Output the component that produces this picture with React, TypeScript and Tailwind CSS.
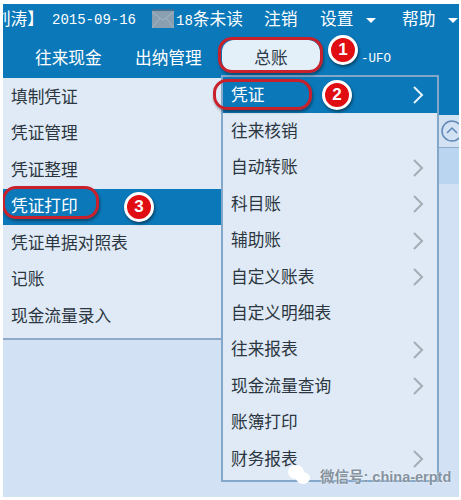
const CJK = "font-['Liberation_Sans','Noto_Sans_CJK_SC',sans-serif]";
const MONO = "font-['Liberation_Mono','Noto_Sans_CJK_SC',monospace]";

const leftItems = ["填制凭证", "凭证管理", "凭证整理", "凭证打印", "凭证单据对照表", "记账", "现金流量录入"];

const subItems = [
  { label: "凭证", arrow: true },
  { label: "往来核销", arrow: false },
  { label: "自动转账", arrow: true },
  { label: "科目账", arrow: true },
  { label: "辅助账", arrow: true },
  { label: "自定义账表", arrow: true },
  { label: "自定义明细表", arrow: false },
  { label: "往来报表", arrow: true },
  { label: "现金流量查询", arrow: true },
  { label: "账簿打印", arrow: false },
  { label: "财务报表", arrow: true },
];

const Chevron = ({ color }: { color: string }) => (
  <svg width="14" height="20" viewBox="0 0 14 20" fill="none" stroke={color} strokeWidth="2">
    <path d="M3 2l8 8-8 8" />
  </svg>
);

const Badge = ({ n, className }: { n: number; className: string }) => (
  <div
    className={`absolute flex h-[30px] w-[30px] items-center justify-center rounded-full border-[3px] border-white bg-[#e00d12] text-[17px] font-bold text-white shadow-[1px_2px_3px_rgba(0,0,0,0.45)] ${className}`}
  >
    {n}
  </div>
);

const Outline = ({ className }: { className: string }) => (
  <div className={`absolute rounded-[14px] border-[3px] border-[#c8212b] shadow-[1px_2px_3px_rgba(0,0,0,0.4)] ${className}`} />
);

const Caret = ({ className }: { className: string }) => (
  <span className={`h-0 w-0 shrink-0 border-x-[5px] border-t-[5px] border-x-transparent border-t-white ${className}`} />
);

const TopBar = () => (
  <div className="h-[74px] bg-[#0b78b9] text-white">
    <div className="flex h-[32px] items-center overflow-hidden text-[16.700px] whitespace-nowrap">
      <div className="flex w-[41px] shrink-0 justify-end overflow-hidden">
        <span className="shrink-0">刘涛】</span>
      </div>
      <span className={`ml-[8px] w-[84px] shrink-0 text-[14px] ${MONO}`}>2015-09-16</span>
      <div className="mb-[4px] ml-[16px] h-[19px] w-[22px] shrink-0 border-t-2 border-[#3f6f96] bg-[#8aa0b0]">
        <svg width="22" height="17" viewBox="0 0 22 17" fill="none" stroke="#a5b6c3" strokeWidth="1">
          <path d="M0 1l11 8 11-8M0 17l8-10M22 17L14 7" />
        </svg>
      </div>
      <span className="ml-[2px] w-[67px] shrink-0">
        <span className={`text-[14px] ${MONO}`}>18</span>条未读
      </span>
      <span className="ml-[21px] w-[34px] shrink-0">注销</span>
      <span className="ml-[22px] w-[34px] shrink-0">设置</span>
      <Caret className="ml-[12px]" />
      <span className="ml-[26px] w-[34px] shrink-0">帮助</span>
      <Caret className="ml-[12px]" />
    </div>
    <div className="flex items-center pt-[4px] text-[16.700px] whitespace-nowrap">
      <span className="ml-[32px] w-[68px] pt-[6px]">往来现金</span>
      <span className="ml-[32px] w-[68px] pt-[6px]">出纳管理</span>
      <span className="ml-[19px] flex h-[32px] w-[98px] items-center justify-center rounded-[12px] bg-[#e3eff9] pt-[6px] text-[#2b3a48]">总账</span>
      <span className={`ml-[41px] pt-[6px] text-[12.500px] ${MONO}`}>-UFO</span>
    </div>
  </div>
);

export default function App() {
  return (
    <div className={`h-[500px] w-[461px] bg-white pt-[4px] pr-[2px] pb-[3px] pl-[3px] ${CJK}`}>
      <div className="relative h-[493px] overflow-hidden bg-[#d2e1f3]">
        <TopBar />

        {/* left menu */}
        <div className="h-[262px] w-[218px] border-b-2 border-[#8eaac6] bg-[#dfeaf6] pt-[1px] text-[16.700px] text-[#2c3640]">
          {leftItems.map((item, i) => (
            <div
              key={item}
              className={`flex h-[36.500px] items-center pl-[8px] ${i === 3 ? "bg-[#0b78b9] text-white" : ""}`}
            >
              {item}
            </div>
          ))}
        </div>

        {/* right edge behind the submenu */}
        <div className="absolute top-[74px] left-[436px] w-[20px]">
          <div className="h-[37px] bg-[#0b78b9]" />
          <div className="flex h-[33px] items-center border-b border-[#8eaac6] bg-[#d3e2f2]">
            <svg className="ml-[2px]" width="18" height="24" viewBox="0 0 18 24" fill="none" stroke="#5d88b8" strokeWidth="1.500">
              <circle cx="11" cy="12" r="10" />
              <path d="M6 14l5-5 5 5" />
            </svg>
          </div>
          <div className="h-[36px] bg-[#b9d5ef]" />
        </div>

        {/* submenu, hangs over the content */}
        <div className="absolute top-[71px] left-[218px] h-[407px] w-[218px] border-2 border-[#82a7c9] bg-[#dfeaf6] text-[16.700px] text-[#2c3640]">
          {subItems.map((item, i) => (
            <div
              key={item.label}
              className={`flex h-[36.400px] items-center justify-between pr-[12px] pl-[8px] ${i === 0 ? "bg-[#0b78b9] text-white" : ""}`}
            >
              <span>{item.label}</span>
              {item.arrow && <Chevron color={i === 0 ? "#e8f2fa" : "#a4acb4"} />}
            </div>
          ))}
        </div>

        <Outline className="top-[33px] left-[215px] h-[36px] w-[105px]" />
        <Outline className="top-[75px] left-[210px] h-[31px] w-[99px]" />
        <Outline className="top-[182px] left-[-1px] h-[33px] w-[97px]" />
        <Badge n={1} className="top-[31px] left-[325px]" />
        <Badge n={2} className="top-[76px] left-[319px]" />
        <Badge n={3} className="top-[188px] left-[121px]" />

        {/* watermark */}
        <svg className="absolute top-[461px] left-[285px]" width="22" height="20" viewBox="0 0 22 20" fill="white">
          <ellipse cx="8" cy="7" rx="8" ry="7" />
          <ellipse cx="15" cy="13" rx="7" ry="6" />
        </svg>
        <div className="absolute top-[463px] left-[317px] text-[14.500px] font-bold whitespace-nowrap text-[#8592a0] [text-shadow:0_0_2px_white]">
          微信号: china-erptd
        </div>
      </div>
    </div>
  );
}
